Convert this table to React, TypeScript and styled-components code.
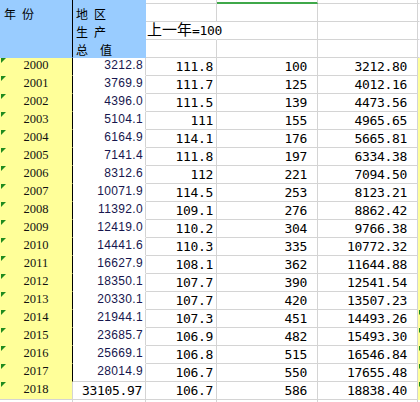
import React from "react";
import styled, { createGlobalStyle } from "styled-components";

const GlobalStyle = createGlobalStyle`
  html, body { margin: 0; padding: 0; background: #ffffff; overflow: hidden; }
  #root { width: 420px; height: 402px; overflow: hidden; }
`;

const GRID = "#d4d4d4";
const BLUE = "#99ccff";
const YELLOW = "#ffff99";
const MONO = `"DejaVu Sans Mono", "Noto Sans CJK SC", monospace`;
const CJK = `"Noto Sans CJK SC", "Noto Sans CJK JP", sans-serif`;

const rows = [
  [2000, "3212.8", "111.8", "100", "3212.80"],
  [2001, "3769.9", "111.7", "125", "4012.16"],
  [2002, "4396.0", "111.5", "139", "4473.56"],
  [2003, "5104.1", "111", "155", "4965.65"],
  [2004, "6164.9", "114.1", "176", "5665.81"],
  [2005, "7141.4", "111.8", "197", "6334.38"],
  [2006, "8312.6", "112", "221", "7094.50"],
  [2007, "10071.9", "114.5", "253", "8123.21"],
  [2008, "11392.0", "109.1", "276", "8862.42"],
  [2009, "12419.0", "110.2", "304", "9766.38"],
  [2010, "14441.6", "110.3", "335", "10772.32"],
  [2011, "16627.9", "108.1", "362", "11644.88"],
  [2012, "18350.1", "107.7", "390", "12541.54"],
  [2013, "20330.1", "107.7", "420", "13507.23"],
  [2014, "21944.1", "107.3", "451", "14493.26"],
  [2015, "23685.7", "106.9", "482", "15493.30"],
  [2016, "25669.1", "106.8", "515", "16546.84"],
  [2017, "28014.9", "106.7", "550", "17655.48"],
  [2018, "33105.97", "106.7", "586", "18838.40"],
] as const;

const Sheet = styled.div`
  display: grid;
  grid-template-columns: 73px 73px 71px 101px 100px 1fr;
  grid-template-rows: 4px repeat(3, 18px) repeat(19, 18px) 18px;
  width: 420px;
  background: #ffffff;
`;

type CellProps = {
  $bg?: string;
  $r?: string;
  $b?: string;
  $bw?: number;
};

const Cell = styled.div<CellProps>`
  box-sizing: border-box;
  position: relative;
  min-width: 0;
  min-height: 0;
  background: ${(p) => p.$bg ?? "transparent"};
  border-right: 1px solid ${(p) => p.$r ?? GRID};
  border-bottom: ${(p) => p.$bw ?? 1}px solid ${(p) => p.$b ?? GRID};
  white-space: nowrap;
`;

const HeaderCell = styled(Cell)<{ $pl: number }>`
  grid-row: 1 / 5;
  display: grid;
  grid-template-rows: repeat(3, 18px);
  align-content: start;
  padding-top: 4px;
  padding-left: ${(p) => p.$pl}px;
  font-family: ${CJK};
  font-size: 12px;
  color: #000;
`;

const HeadLine = styled.div<{ $gap: number }>`
  display: flex;
  gap: ${(p) => p.$gap}px;
  height: 18px;
  line-height: 18px;
  align-items: center;
  padding-top: 1px;
  box-sizing: border-box;
`;

const TextCell = styled(Cell)<{ $align?: string; $pr?: number; $pb?: number }>`
  display: flex;
  align-items: flex-end;
  justify-content: ${(p) => p.$align ?? "flex-end"};
  padding-right: ${(p) => p.$pr ?? 0}px;
  padding-bottom: ${(p) => p.$pb ?? 0}px;
  overflow: visible;
`;

const YearCell = styled(TextCell)`
  font-family: "Liberation Serif", "Times New Roman", serif;
  font-size: 12.5px;
  line-height: 13px;
  color: #111;
`;

const GdpCell = styled(TextCell)`
  font-family: "Liberation Sans", Arial, sans-serif;
  font-size: 12px;
  letter-spacing: 0.35px;
  line-height: 13px;
  color: #16164e;
`;

const MonoCell = styled(TextCell)`
  font-family: ${MONO};
  font-size: 13px;
  line-height: 13px;
  letter-spacing: -0.33px;
  color: #000;
`;

const NoteCell = styled(Cell)`
  display: flex;
  align-items: flex-end;
  padding: 0 0 1px 1px;
  overflow: visible;
`;

const NoteCjk = styled.span`
  font-family: ${CJK};
  font-size: 15px;
  line-height: 15px;
  color: #000;
`;

const NoteNum = styled.span`
  font-family: ${MONO};
  font-size: 13px;
  line-height: 15px;
  letter-spacing: -0.33px;
  color: #000;
`;

const Note = styled.div`
  display: flex;
  align-items: baseline;
`;

const GreenMark = styled.span`
  position: absolute;
  left: 1px;
  top: 0;
  width: 0;
  height: 0;
  border-top: 5px solid #1f8a1f;
  border-right: 5px solid transparent;
`;

const SelectTop = styled(Cell)`
  border-bottom-color: #3fa84a;
`;

export default function App() {
  const cells: React.ReactNode[] = [];

  cells.push(
    <HeaderCell key="ha" $bg={BLUE} $r="#000" $b="transparent" $pl={4}>
      <HeadLine $gap={6}>
        <span>年</span>
        <span>份</span>
      </HeadLine>
    </HeaderCell>
  );
  cells.push(
    <HeaderCell key="hb" $bg={BLUE} $r={BLUE} $b="transparent" $pl={3}>
      <HeadLine $gap={6}>
        <span>地</span>
        <span>区</span>
      </HeadLine>
      <HeadLine $gap={6}>
        <span>生</span>
        <span>产</span>
      </HeadLine>
      <HeadLine $gap={12}>
        <span>总</span>
        <span>值</span>
      </HeadLine>
    </HeaderCell>
  );
  cells.push(<Cell key="r0c" />);
  cells.push(<SelectTop key="r0d" $bw={2} />);
  cells.push(<Cell key="r0e" />);
  cells.push(<Cell key="r0f" $r="transparent" />);

  cells.push(<Cell key="r1c" />, <Cell key="r1d" />, <Cell key="r1e" />, <Cell key="r1f" $r="transparent" />);
  cells.push(
    <NoteCell key="r2c" $r="transparent">
      <Note>
        <NoteCjk>上一年</NoteCjk>
        <NoteNum>=100</NoteNum>
      </Note>
    </NoteCell>,
    <Cell key="r2d" />,
    <Cell key="r2e" />,
    <Cell key="r2f" $r="transparent" />
  );
  cells.push(<Cell key="r3c" />, <Cell key="r3d" />, <Cell key="r3e" />, <Cell key="r3f" $r="transparent" />);

  rows.forEach(([y, g, c, d, e], i) => {
    const last = i === rows.length - 1;
    const beforeLast = i === rows.length - 2;
    cells.push(
      <YearCell key={`a${y}`} $bg={YELLOW} $r={last ? GRID : "#000"} $b={last ? GRID : YELLOW} $align="center" $pb={3}>
        <GreenMark />
        {y}
      </YearCell>
    );
    if (last) {
      cells.push(
        <MonoCell key={`b${y}`} $pr={3} $pb={2}>
          {g}
        </MonoCell>
      );
    } else {
      cells.push(
        <GdpCell key={`b${y}`} $b={beforeLast ? GRID : "#ffffff"} $pr={2} $pb={3}>
          {g}
        </GdpCell>
      );
    }
    cells.push(
      <MonoCell key={`c${y}`} $pr={3} $pb={2}>
        {c}
      </MonoCell>,
      <MonoCell key={`d${y}`} $pr={10} $pb={2}>
        {d}
      </MonoCell>,
      <MonoCell key={`e${y}`} $pr={10} $pb={2}>
        {e}
      </MonoCell>,
      <Cell key={`f${y}`} $bg={YELLOW} $r={YELLOW} $b={YELLOW}>
        {y >= 2014 ? <GreenMark /> : null}
      </Cell>
    );
  });

  cells.push(
    <Cell key="za" />,
    <Cell key="zb" />,
    <Cell key="zc" />,
    <Cell key="zd" />,
    <Cell key="ze" />,
    <Cell key="zf" $r="transparent" />
  );

  return (
    <>
      <GlobalStyle />
      <Sheet>{cells}</Sheet>
    </>
  );
}
